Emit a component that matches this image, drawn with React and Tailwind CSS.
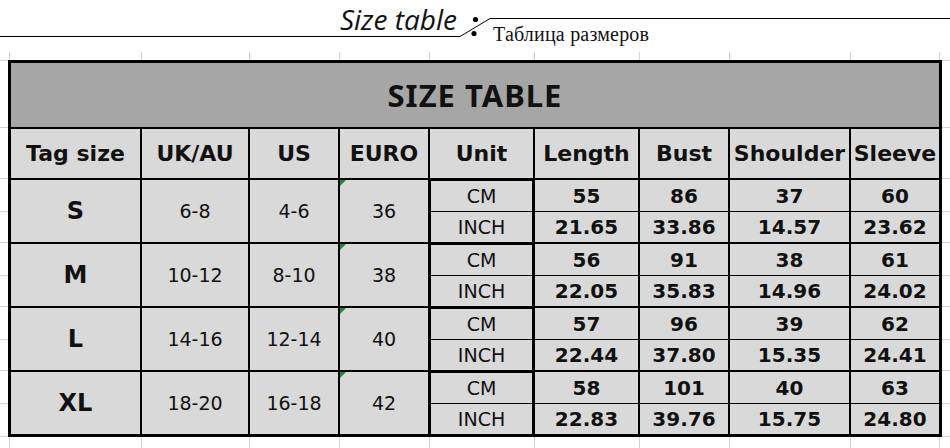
import React from "react";

const groups = [
  { tag: "S", uk: "6-8", us: "4-6", eu: "36", cm: ["55", "86", "37", "60"], inch: ["21.65", "33.86", "14.57", "23.62"] },
  { tag: "M", uk: "10-12", us: "8-10", eu: "38", cm: ["56", "91", "38", "61"], inch: ["22.05", "35.83", "14.96", "24.02"] },
  { tag: "L", uk: "14-16", us: "12-14", eu: "40", cm: ["57", "96", "39", "62"], inch: ["22.44", "37.80", "15.35", "24.41"] },
  { tag: "XL", uk: "18-20", us: "16-18", eu: "42", cm: ["58", "101", "40", "63"], inch: ["22.83", "39.76", "15.75", "24.80"] },
];

const headers = ["Tag size", "UK/AU", "US", "EURO", "Unit", "Length", "Bust", "Shoulder", "Sleeve"];

function Ticks({ h }) {
  const widths = ["w-[132px]", "w-[108px]", "w-[90px]", "w-[90px]", "w-[105px]", "w-[105px]", "w-[90px]", "w-[121px]", "w-[90px]"];
  return (
    <div className={`flex ${h}`}>
      <div className="w-[9px] shrink-0" />
      {widths.map((w, i) => (
        <div
          key={i}
          className={`${w} shrink-0 border-l border-[#d2d2d2] ${i === widths.length - 1 ? "border-r" : ""}`}
        />
      ))}
    </div>
  );
}

function Gutter({ w }) {
  const segs = ["h-[67px]", "h-[51px]", "h-[33px]", "h-[31px]", "h-[33px]", "h-[31px]", "h-[33px]", "h-[31px]", "h-[33px]", "h-[33px]"];
  return (
    <div className={`${w} flex flex-col`}>
      <div className="h-[1px] bg-[#d2d2d2]" />
      {segs.map((s, i) => (
        <div key={i} className={`${s} border-b border-[#d2d2d2]`} />
      ))}
    </div>
  );
}

const cell = "bg-[#d9d9d9] flex items-center justify-center text-[#111] font-['DejaVu_Sans',sans-serif]";

export default function App() {
  return (
    <div className="w-[950px] h-[448px] bg-white overflow-hidden">
      {/* heading */}
      <div className="flex h-[52px]">
        <div className="w-[460px] h-[37px] border-b border-black flex items-end justify-end pr-[3px]">
          <span className="font-['Open_Sans',sans-serif] italic font-normal text-[28px] leading-[28px] mb-[3px] text-[#111]">
            Size table
          </span>
        </div>
        <svg width="30" height="40" viewBox="0 0 30 40" className="shrink-0">
          <line x1="0" y1="36.5" x2="30" y2="18.5" stroke="#000" strokeWidth="1" />
          <circle cx="15.5" cy="19.5" r="2.6" fill="#000" />
          <circle cx="14" cy="33.5" r="2.6" fill="#000" />
        </svg>
        <div className="flex-1 mt-[18px] h-[30px] border-t border-black pl-[3px] pt-[4px]">
          <span className="font-['Liberation_Serif',serif] text-[20px] leading-none tracking-[0.2px] text-[#111]">
            Таблица размеров
          </span>
        </div>
      </div>

      <Ticks h="h-[8px]" />

      <div className="flex">
        <Gutter w="w-[8px]" />
        <div className="w-[934px] shrink-0 border-[3px] border-black bg-black grid grid-cols-[129px_106px_88px_88px_103px_103px_88px_119px_88px] grid-rows-[64px_50px_32px_30px_32px_30px_32px_30px_32px_30px] gap-x-[2px] gap-y-[1px]">
          <div className="col-span-9 bg-[#a6a6a6] flex items-center justify-center font-['Noto_Sans',sans-serif] font-bold text-[31px] tracking-[1px] text-[#111]">
            SIZE TABLE
          </div>
          {headers.map((h) => (
            <div key={h} className={`${cell} border-t border-black font-bold text-[22px] whitespace-nowrap`}>
              {h}
            </div>
          ))}
          {groups.map((g) => (
            <React.Fragment key={g.tag}>
              <div className={`${cell} row-span-2 border-t border-black font-bold text-[24px]`}>{g.tag}</div>
              <div className={`${cell} row-span-2 border-t border-black text-[19px]`}>{g.uk}</div>
              <div className={`${cell} row-span-2 border-t border-black text-[19px]`}>{g.us}</div>
              <div className={`${cell} row-span-2 border-t border-black text-[19px] relative`}>
                <span className="absolute left-0 top-0 w-0 h-0 border-t-[6px] border-t-[#1f8a3a] border-r-[6px] border-r-transparent" />
                {g.eu}
              </div>
              <div className={`${cell} border-t-2 border-x border-black text-[19px]`}>CM</div>
              {g.cm.map((v, i) => (
                <div key={"c" + i} className={`${cell} border-t border-black font-bold text-[20px]`}>
                  {v}
                </div>
              ))}
              <div className={`${cell} border-x border-black text-[19px]`}>INCH</div>
              {g.inch.map((v, i) => (
                <div key={"n" + i} className={`${cell} font-bold text-[20px]`}>
                  {v}
                </div>
              ))}
            </React.Fragment>
          ))}
        </div>
        <div className="flex-1">
          <Gutter w="w-full" />
        </div>
      </div>

      <Ticks h="h-[11px]" />
    </div>
  );
}
